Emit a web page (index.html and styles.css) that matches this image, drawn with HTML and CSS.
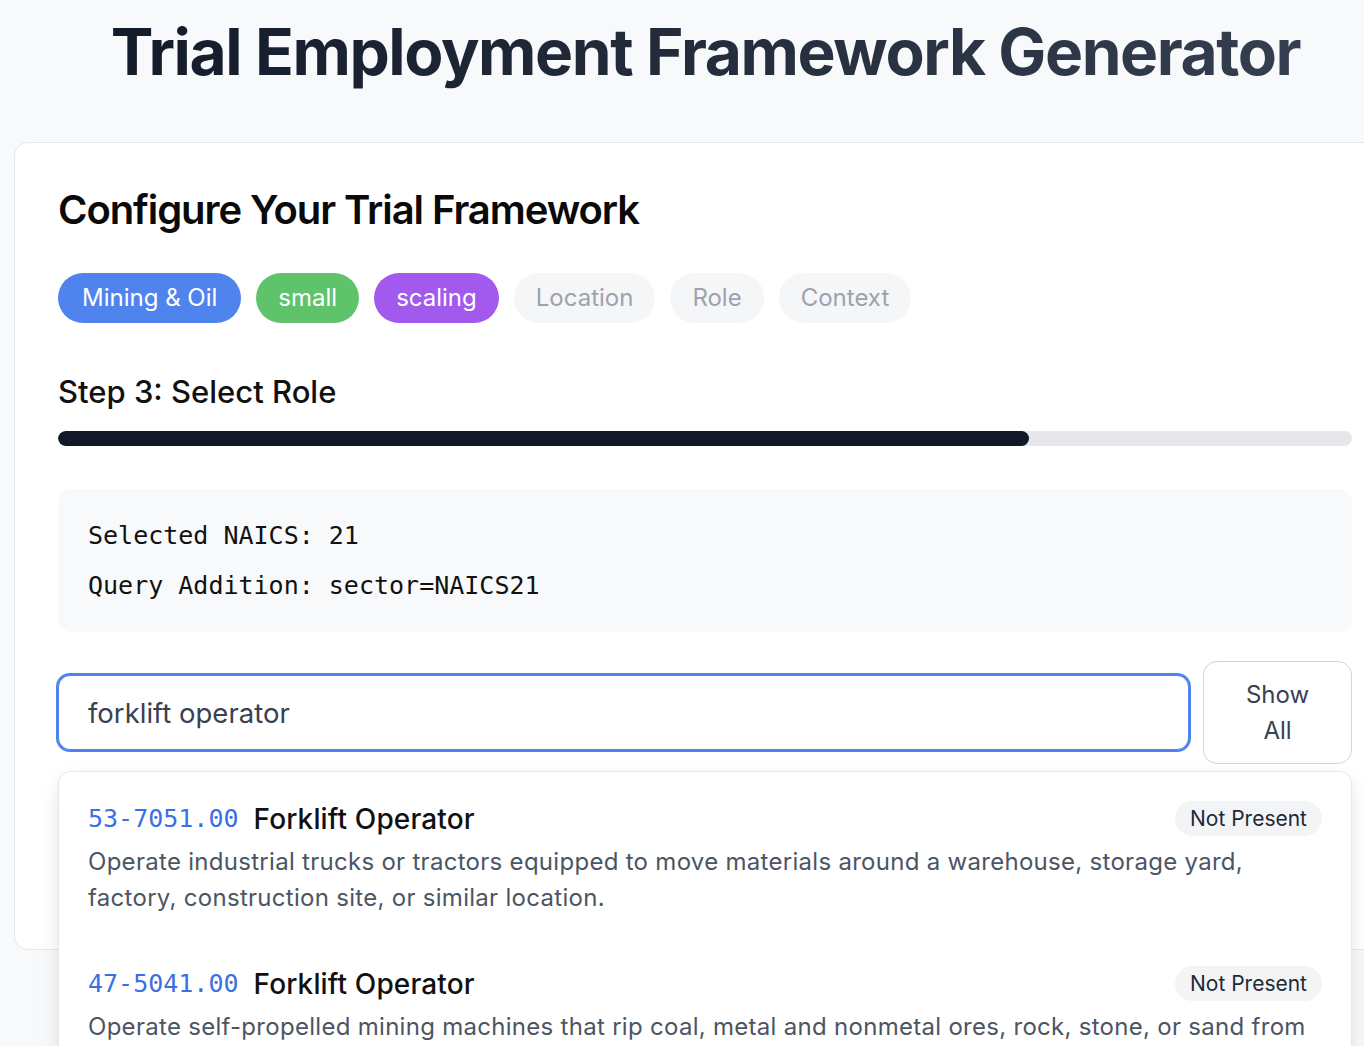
FILE: index.html
```html
<!DOCTYPE html>
<html lang="en">
<head>
<meta charset="utf-8">
<title>Trial Employment Framework Generator</title>
<link rel="stylesheet" href="styles.css">
</head>
<body>
<div class="page">
  <h1 class="title">Trial Employment Framework Generator</h1>
  <section class="card">
    <h2 class="card-title">Configure Your Trial Framework</h2>
    <div class="chips">
      <span class="chip chip-blue">Mining &amp; Oil</span>
      <span class="chip chip-green">small</span>
      <span class="chip chip-purple">scaling</span>
      <span class="chip chip-off">Location</span>
      <span class="chip chip-off">Role</span>
      <span class="chip chip-off">Context</span>
    </div>
    <h3 class="step">Step 3: Select Role</h3>
    <div class="progress"><div class="progress-fill" style="width:75%"></div></div>
    <div class="info">
      <p class="info-line">Selected NAICS: 21</p>
      <p class="info-line">Query Addition: sector=NAICS21</p>
    </div>
    <div class="search">
      <div class="search-row">
        <input class="search-input" type="text" value="forklift operator">
        <button class="show-all" type="button">Show All</button>
      </div>
      <div class="dropdown">
        <div class="result">
          <div class="result-head">
            <span class="code">53-7051.00</span>
            <span class="role">Forklift Operator</span>
            <span class="badge">Not Present</span>
          </div>
          <p class="desc">Operate industrial trucks or tractors equipped to move materials around a warehouse, storage yard, factory, construction site, or similar location.</p>
        </div>
        <div class="result">
          <div class="result-head">
            <span class="code">47-5041.00</span>
            <span class="role">Forklift Operator</span>
            <span class="badge">Not Present</span>
          </div>
          <p class="desc">Operate self-propelled mining machines that rip coal, metal and nonmetal ores, rock, stone, or sand from the mine face, loading it onto conveyors or into shuttle cars in a continuous operation.</p>
        </div>
      </div>
    </div>
  </section>
</div>
</body>
</html>
```

FILE: styles.css
```css
html, body {
  margin: 0;
  padding: 0;
  overflow: hidden;
  height: 100%;
}
body {
  background: #f8f9fb;
  font-family: Inter, "Noto Sans", "Liberation Sans", sans-serif;
  color: #111827;
}
.page {
  width: 1383px;
  padding: 13px 0 0 14px;
}
.title {
  margin: 0 0 52px;
  font-size: 64px;
  line-height: 77px;
  font-weight: 700;
  letter-spacing: -0.022em;
  text-align: center;
  background: linear-gradient(90deg, #111827, #374151);
  -webkit-background-clip: text;
  background-clip: text;
  color: transparent;
}
.card {
  position: relative;
  background: #fff;
  border: 1px solid #e5e7eb;
  border-radius: 14px;
  padding: 43px 44px 185px 43px;
}
.card-title {
  margin: 0 0 39px;
  font-size: 40px;
  line-height: 48px;
  font-weight: 600;
  letter-spacing: -0.027em;
  color: #0a0a0a;
}
.chips {
  display: flex;
  gap: 15px;
}
.chip {
  display: inline-block;
  padding: 10px 22px;
  font-size: 24px;
  line-height: 30px;
  border-radius: 999px;
}
.chip-blue { background: #4f83ee; color: #fff; padding: 10px 24px; }
.chip-green { background: #5fc36b; color: #fff; }
.chip-purple { background: #a259ee; color: #fff; }
.chip-off { background: #f5f6f8; color: #9ca3af; }
.step {
  margin: 51px 0 21px;
  font-size: 31px;
  line-height: 36px;
  font-weight: 500;
  color: #111;
}
.progress {
  height: 15px;
  background: #e5e7eb;
  border-radius: 999px;
  overflow: hidden;
}
.progress-fill {
  height: 100%;
  background: #111827;
  border-radius: 999px;
}
.info {
  margin-top: 43px;
  background: #f8f9fb;
  border-radius: 14px;
  padding: 29px 30px 28px;
  display: flex;
  flex-direction: column;
  gap: 14px;
}
.info-line {
  margin: 0;
  font-family: "DejaVu Sans Mono", "Liberation Mono", monospace;
  font-size: 25px;
  line-height: 36px;
  color: #111;
}
.search {
  position: relative;
  margin-top: 29px;
}
.search-row {
  display: flex;
  align-items: center;
  gap: 14px;
}
.search-input {
  flex: 1;
  min-width: 0;
  height: 75px;
  box-sizing: border-box;
  border: 1px solid #4f83ee;
  box-shadow: 0 0 0 2px #4f83ee;
  border-radius: 12px;
  padding: 0 29px;
  font-family: Inter, "Noto Sans", sans-serif;
  font-size: 27.5px;
  color: #374151;
  background: #fff;
  outline: none;
}
.show-all {
  width: 149px;
  height: 103px;
  box-sizing: border-box;
  padding: 0 36px;
  background: #fff;
  border: 1px solid #d1d5db;
  border-radius: 14px;
  font-family: Inter, "Noto Sans", sans-serif;
  font-size: 24px;
  line-height: 36px;
  color: #374151;
}
.dropdown {
  position: absolute;
  top: calc(100% + 7px);
  left: 0;
  right: 0;
  background: #fff;
  border: 1px solid #e5e7eb;
  border-radius: 12px;
  box-shadow: 0 10px 25px rgba(0, 0, 0, 0.08), 0 4px 8px rgba(0, 0, 0, 0.04);
}
.result {
  padding: 29px 29px 21px;
}
.result-head {
  display: flex;
  align-items: center;
  gap: 15px;
  height: 35px;
}
.code {
  font-family: "DejaVu Sans Mono", "Liberation Mono", monospace;
  font-size: 25px;
  color: #3b6fe4;
}
.role {
  font-size: 28px;
  font-weight: 500;
  letter-spacing: 0.005em;
  color: #111;
}
.badge {
  margin-left: auto;
  padding: 0 15px;
  line-height: 35px;
  font-size: 21px;
  background: #f3f4f6;
  border-radius: 999px;
  color: #1f2937;
}
.desc {
  margin: 8px 0 0;
  font-size: 24px;
  line-height: 36px;
  letter-spacing: 0.012em;
  color: #4b5563;
}
```
